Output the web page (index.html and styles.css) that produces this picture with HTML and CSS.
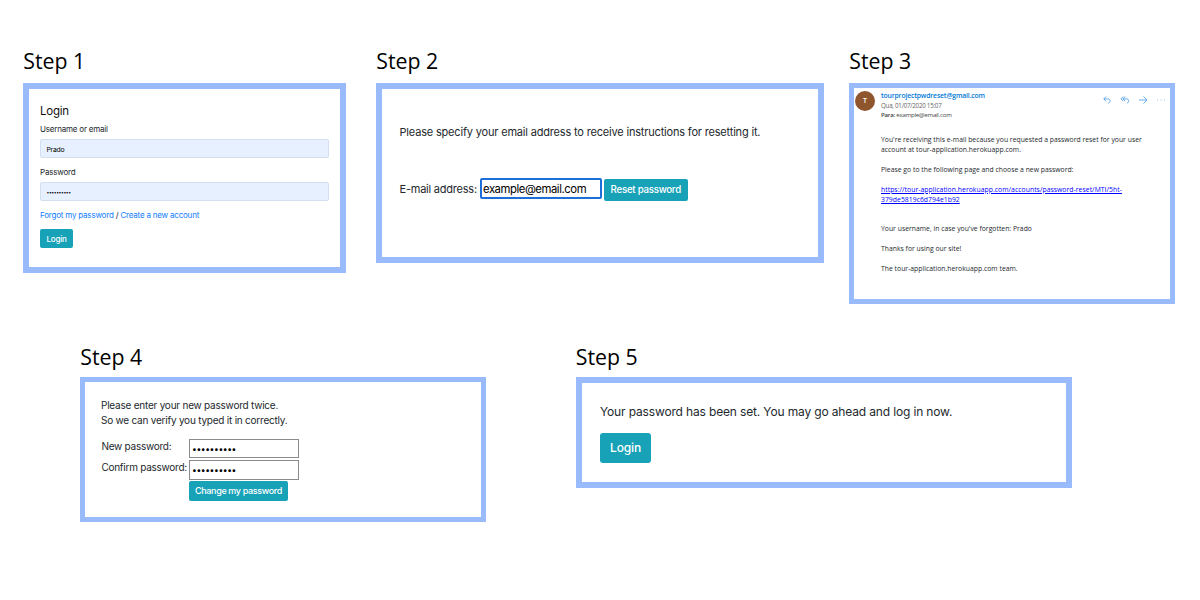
FILE: index.html
```html
<!DOCTYPE html>
<html lang="en">
<head>
<meta charset="utf-8">
<title>Password reset steps</title>
<link rel="stylesheet" href="styles.css">
</head>
<body>
<main class="board">
  <div class="row row-top">
    <section class="step step-login">
      <h2 class="step-title">Step 1</h2>
      <div class="panel">
        <h3 class="login-title">Login</h3>
        <div class="label">Username or email</div>
        <div class="field">Prado</div>
        <div class="label">Password</div>
        <div class="field"><span class="dots-small">••••••••••</span></div>
        <div class="links"><a>Forgot my password</a> / <a>Create a new account</a></div>
        <div class="btn btn-login">Login</div>
      </div>
    </section>
    <section class="step step-email">
      <h2 class="step-title">Step 2</h2>
      <div class="panel">
        <p class="email-hint">Please specify your email address to receive instructions for resetting it.</p>
        <div class="email-form">
          <span class="email-label">E-mail address:</span>
          <div class="email-input">example@email.com</div>
          <div class="btn btn-reset">Reset password</div>
        </div>
      </div>
    </section>
    <section class="step step-message">
      <h2 class="step-title">Step 3</h2>
      <div class="panel">
        <div class="avatar">T</div>
        <div class="mail">
          <header class="mail-head">
            <div>
              <div class="sender">tourprojectpwdreset@gmail.com</div>
              <div class="date">Qua, 01/07/2020 15:07</div>
              <div class="to"><b>Para:</b> example@email.com</div>
            </div>
            <div class="actions">
              <svg viewBox="0 0 10 10"><path d="M4 1.5 1.8 3.9 4 6.2M1.8 3.9H5.8C9 3.9 8.7 7 6.2 8.4"/></svg>
              <svg viewBox="0 0 10 10"><path d="M3.2 1.5 1 3.9 3.2 6.2M5.2 1.5 3 3.9 5.2 6.2M3 3.9H6.4C9.5 3.9 9.2 7 7 8.4"/></svg>
              <svg viewBox="0 0 10 10"><path d="M1 5H9M5.5 1.5 9 5 5.5 8.5"/></svg>
              <svg viewBox="0 0 10 10"><path class="more" d="M1 5H2M4.5 5H5.5M8 5H9"/></svg>
            </div>
          </header>
          <div class="mail-body">
            <p>You're receiving this e-mail because you requested a password reset for your user<br>account at tour-application.herokuapp.com.</p>
            <p>Please go to the following page and choose a new password:</p>
            <p class="url"><a>https://tour-application.herokuapp.com/accounts/password-reset/MTI/5ht-<br>379de5819c6d794e1b92</a></p>
            <p>Your username, in case you've forgotten: Prado</p>
            <p>Thanks for using our site!</p>
            <p>The tour-application.herokuapp.com team.</p>
          </div>
        </div>
      </div>
    </section>
  </div>
  <div class="row row-bottom">
    <section class="step step-change">
      <h2 class="step-title">Step 4</h2>
      <div class="panel">
        <p class="change-hint">Please enter your new password twice.<br>So we can verify you typed it in correctly.</p>
        <div class="change-form">
          <span class="change-label">New password:</span><div class="change-input">••••••••••</div>
          <span class="change-label">Confirm password:</span><div class="change-input">••••••••••</div>
          <div class="btn btn-change">Change my password</div>
        </div>
      </div>
    </section>
    <section class="step step-done">
      <h2 class="step-title">Step 5</h2>
      <div class="panel">
        <p class="done-text">Your password has been set. You may go ahead and log in now.</p>
        <div class="btn btn-done">Login</div>
      </div>
    </section>
  </div>
</main>
</body>
</html>
```
FILE: styles.css
```css
* { box-sizing: border-box; }
body { margin: 0; background: #fff; color: #23282d; font-family: Inter, "Liberation Sans", sans-serif; }
h2, h3, p { margin: 0; font-weight: 400; }
.board { width: 1200px; height: 600px; overflow: hidden; padding-top: 47px; }
.row { display: flex; align-items: flex-start; }
.row-top { height: 296px; padding-left: 23px; }
.row-bottom { padding-left: 80px; }
.step-title { height: 36px; padding-left: .3px; font: 400 21.3px/27px "Open Sans", "Noto Sans", sans-serif; color: #000; }
.row-bottom .step-title { height: 34px; }
.panel { border: 6px solid #99bbfc; background: #fff; }
.btn { display: flex; align-items: center; justify-content: center; background: #17a2b8; color: #fff; border-radius: 2px; font-weight: 500; white-space: nowrap; }
a { color: #117dff; }

.step-login { width: 323px; margin-right: 30px; }
.step-login .panel { height: 189.5px; padding: 13.5px 11px 0; font-size: 8px; letter-spacing: -.2px; }
.login-title { font-size: 11.5px; line-height: 16px; height: 20.5px; letter-spacing: -.25px; color: #111; }
.label { line-height: 12px; height: 16px; }
.field { display: flex; align-items: center; width: 289px; height: 19px; margin-bottom: 8px; padding: 1px 0 0 5.5px; border: 1px solid #d3dfee; border-radius: 2px; background: #e7f0fe; font-size: 6.8px; letter-spacing: -.25px; color: #000; }
.dots-small { font-size: 5px; letter-spacing: -.4px; }
.links { line-height: 12px; height: 20px; letter-spacing: -.2px; }
.btn-login { width: 33px; height: 19px; }

.step-email { width: 448px; margin-right: 25px; }
.step-email .panel { height: 179.7px; padding: 35px 17.5px 0; font-size: 11px; letter-spacing: -.18px; }
.email-hint { line-height: 16px; height: 54px; white-space: nowrap; }
.email-form { display: flex; }
.email-label { width: 80.5px; line-height: 22px; letter-spacing: -.22px; white-space: nowrap; }
.email-input { width: 122px; height: 21px; border: 2px solid #1a6fd8; border-radius: 2px; padding-left: 1px; line-height: 18px; font-size: 11.3px; letter-spacing: -.44px; color: #000; }
.btn-reset { width: 83.5px; height: 21.5px; margin: 1px 0 0 2px; font-size: 9.7px; letter-spacing: -.26px; }

.step-message { width: 326px; }
.step-message .panel { display: flex; height: 221px; border-width: 5.5px; padding-left: 1px; font-family: "Open Sans", "Noto Sans", sans-serif; font-size: 6.8px; }
.avatar { flex: none; width: 20px; height: 20px; margin: 3px 6px 0 0; border-radius: 50%; background: #8f562e; color: #fff; font-size: 7px; font-weight: 600; line-height: 20px; text-align: center; }
.mail { flex: 1; white-space: nowrap; }
.mail-head { display: flex; justify-content: space-between; height: 47px; padding-top: 3px; line-height: 9.5px; }
.sender { color: #0078d7; font-weight: 600; letter-spacing: -.14px; }
.date { font-size: 6.2px; letter-spacing: -.24px; color: #666; }
.to { font-size: 6.1px; letter-spacing: -.23px; color: #444; }
.to b { font-weight: 600; }
.actions { display: flex; gap: 8px; padding: 4px 4px 0 0; }
.actions svg { width: 10px; height: 10px; fill: none; stroke: #3d96e0; stroke-width: .8; }
.actions .more { stroke: #79b6e8; }
.mail-body { line-height: 9.93px; letter-spacing: .02px; }
.mail-body p { margin-bottom: 9.93px; }
.mail-body .url { margin-bottom: 19.86px; letter-spacing: .05px; }
.url a { color: #00f; text-decoration: underline; }

.step-change { width: 406px; margin-right: 89.5px; }
.step-change .panel { height: 145px; border-width: 5px; padding: 15.5px 16px 0; font-size: 10px; letter-spacing: -.225px; }
.change-hint { line-height: 15px; height: 41px; }
.change-form { display: grid; grid-template-columns: 88px 110px; row-gap: 2px; }
.change-label { line-height: 15px; padding-left: .4px; letter-spacing: -.25px; white-space: nowrap; }
.change-input { height: 19.5px; border: 1px solid #8b8b8b; padding-left: 2px; line-height: 18px; font-size: 8.5px; letter-spacing: -.38px; color: #000; }
.btn-change { grid-column: 2; width: 99px; height: 19.5px; margin-top: -.5px; font-size: 9px; letter-spacing: -.36px; }

.step-done { width: 496.5px; }
.step-done .panel { height: 111px; padding: 20px 18.5px 0; font-size: 12px; letter-spacing: -.15px; }
.done-text { line-height: 18px; height: 30px; }
.btn-done { width: 51px; height: 29.5px; border-radius: 3px; }
```
